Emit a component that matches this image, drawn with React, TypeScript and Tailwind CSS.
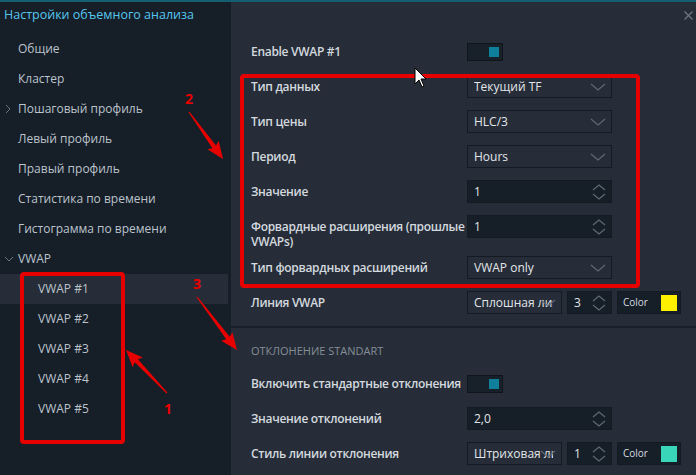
import React from "react";

const font = { fontFamily: '"Open Sans", "Noto Sans", sans-serif' };

const sideItems = [
  { label: "Общие" },
  { label: "Кластер" },
  { label: "Пошаговый профиль", chevron: "right" },
  { label: "Левый профиль" },
  { label: "Правый профиль" },
  { label: "Статистика по времени" },
  { label: "Гистограмма по времени" },
  { label: "VWAP", chevron: "down" },
];

const vwaps = ["VWAP #1", "VWAP #2", "VWAP #3", "VWAP #4", "VWAP #5"];

function ChevronDown() {
  return (
    <svg width="16" height="8" viewBox="0 0 16 8" className="shrink-0">
      <polyline points="1,1 8,7 15,1" fill="none" stroke="#5f6874" strokeWidth="1.2" />
    </svg>
  );
}

function Spinner() {
  return (
    <svg width="14" height="16" viewBox="0 0 14 16" className="shrink-0">
      <polyline points="1,6 7,1 13,6" fill="none" stroke="#5f6874" strokeWidth="1.2" />
      <polyline points="1,10 7,15 13,10" fill="none" stroke="#5f6874" strokeWidth="1.2" />
    </svg>
  );
}

function Select({ value, w = "w-[145px]" }: { value: string; w?: string }) {
  return (
    <div className={`${w} relative h-[23px] flex items-center border border-[#141a22] bg-[#262d38] pl-[6px] pr-[8px]`}>
      <span className="flex-1 min-w-0 overflow-hidden whitespace-nowrap text-[12px] text-[#e2e6ea]">{value}</span>
      <span className="absolute right-[5px] top-[7px] flex">
        <ChevronDown />
      </span>
    </div>
  );
}

function NumInput({ value, w = "w-[145px]" }: { value: string; w?: string }) {
  return (
    <div className={`${w} h-[23px] flex items-center border border-[#141a22] bg-[#161e28] pl-[6px] pr-[5px]`}>
      <span className="flex-1 text-[12px] text-[#e2e6ea]">{value}</span>
      <Spinner />
    </div>
  );
}

function Toggle() {
  return (
    <div className="w-[36px] h-[18px] border border-[#10151c] bg-[#18202a] flex items-center justify-end pr-[3px]">
      <div className="w-[10px] h-[10px] bg-[#0f809b]" />
    </div>
  );
}

function ColorBox({ color }: { color: string }) {
  return (
    <div className="w-[64px] h-[23px] flex items-center justify-between border border-[#141a22] bg-[#161e28] pl-[5px] pr-[3px]">
      <span className="text-[10px] text-[#d8dde2]">Color</span>
      <div className="w-[16px] h-[16px]" style={{ background: color }} />
    </div>
  );
}

function LineRow({ style, width, color }: { style: string; width: string; color: string }) {
  return (
    <div className="flex gap-[5px]">
      <Select value={style} w="w-[95px]" />
      <NumInput value={width} w="w-[45px]" />
      <ColorBox color={color} />
    </div>
  );
}

function Row({ label, children, h = "h-[35px]" }: { label: React.ReactNode; children: React.ReactNode; h?: string }) {
  return (
    <div className={`${h} shrink-0 flex items-start`}>
      <div className="w-[216px] pt-[4px] text-[12px] leading-[15px] font-semibold tracking-[-0.3px] whitespace-nowrap text-[#d3d9df]">
        {label}
      </div>
      <div className="h-[23px] flex items-center">{children}</div>
    </div>
  );
}

function arrow(x1: number, y1: number, x2: number, y2: number) {
  const len = Math.hypot(x2 - x1, y2 - y1);
  const dx = (x2 - x1) / len;
  const dy = (y2 - y1) / len;
  const nx = -dy;
  const ny = dx;
  const hl = 15;
  const bx = x2 - dx * hl;
  const by = y2 - dy * hl;
  const pts = [
    [x1 + nx * 0.6, y1 + ny * 0.6],
    [bx + nx * 2.2, by + ny * 2.2],
    [bx - dx * 2 + nx * 7, by - dy * 2 + ny * 7],
    [x2, y2],
    [bx - dx * 2 - nx * 7, by - dy * 2 - ny * 7],
    [bx - nx * 2.2, by - ny * 2.2],
    [x1 - nx * 0.6, y1 - ny * 0.6],
  ];
  return pts.map((p) => p.join(",")).join(" ");
}

function Annotations() {
  return (
    <svg className="absolute inset-0 pointer-events-none" width="696" height="475" viewBox="0 0 696 475">
      <rect x="242" y="74" width="396" height="210" rx="2" fill="none" stroke="#e60000" strokeWidth="4" />
      <rect x="22" y="272" width="101" height="168" rx="2" fill="none" stroke="#e60000" strokeWidth="4" />
      <polygon points={arrow(189, 110, 223, 157)} fill="#e60000" />
      <polygon points={arrow(197, 295, 237, 348)} fill="#e60000" />
      <polygon points={arrow(167, 391, 126, 348)} fill="#e60000" />
      <text x="185" y="102" fill="#e60000" fontSize="14" fontWeight="700" style={font}>2</text>
      <text x="193" y="287" fill="#e60000" fontSize="14" fontWeight="700" style={font}>3</text>
      <text x="164" y="412" fill="#e60000" fontSize="14" fontWeight="700" style={font}>1</text>
      <polygon points="415,66 415,82 419,78 422,85 424,84 421,77 426,77" fill="#ffffff" stroke="#000000" strokeWidth="1" />
    </svg>
  );
}

export default function App() {
  return (
    <div className="relative w-[696px] h-[475px] overflow-hidden border-t-2 border-[#135f71] flex" style={font}>
      <aside className="w-[231px] h-full bg-[#161e28] flex flex-col">
        <div className="h-[26px] shrink-0 flex items-center pl-[4px] text-[12.5px] text-[#56c6ee]">Настройки объемного анализа</div>
        <div className="mt-[6px] flex flex-col">
          {sideItems.map((it) => (
            <div key={it.label} className="relative h-[30px] shrink-0 flex items-center pl-[18px] text-[12px] text-[#bcc4cc]">
              {it.chevron === "right" && (
                <svg className="absolute left-[5px]" width="6" height="10" viewBox="0 0 6 10">
                  <polyline points="1,1 5,5 1,9" fill="none" stroke="#6b7480" strokeWidth="1" />
                </svg>
              )}
              {it.chevron === "down" && (
                <svg className="absolute left-[4px]" width="10" height="6" viewBox="0 0 10 6">
                  <polyline points="1,1 5,5 9,1" fill="none" stroke="#6b7480" strokeWidth="1" />
                </svg>
              )}
              {it.label}
            </div>
          ))}
          {vwaps.map((v, i) => (
            <div
              key={v}
              className={`w-[228px] h-[30px] shrink-0 flex items-center pl-[38px] text-[12px] text-[#bcc4cc] ${i === 0 ? "bg-[#262d38]" : ""}`}
            >
              {v}
            </div>
          ))}
        </div>
      </aside>

      <main className="flex-1 h-full overflow-hidden bg-[#262d38] flex flex-col">
        <div className="h-[38px] shrink-0 flex justify-end pr-[3px] pt-[9px]">
          <svg width="9" height="9" viewBox="0 0 9 9">
            <path d="M0.5 0.5 L8.5 8.5 M8.5 0.5 L0.5 8.5" stroke="#6d7683" strokeWidth="1.2" />
          </svg>
        </div>
        <div className="pl-[20px] shrink-0 flex flex-col">
          <Row label="Enable VWAP #1">
            <Toggle />
          </Row>
          <Row label="Тип данных">
            <Select value="Текущий TF" />
          </Row>
          <Row label="Тип цены">
            <Select value="HLC/3" />
          </Row>
          <Row label="Период">
            <Select value="Hours" />
          </Row>
          <Row label="Значение">
            <NumInput value="1" />
          </Row>
          <Row
            label={
              <>
                Форвардные расширения (прошлые
                <br />
                VWAPs)
              </>
            }
            h="h-[41px]"
          >
            <NumInput value="1" />
          </Row>
          <Row label="Тип форвардных расширений">
            <Select value="VWAP only" />
          </Row>
          <Row label="Линия VWAP">
            <LineRow style="Сплошная линия" width="3" color="#fff000" />
          </Row>
        </div>
        <div className="h-[2px] shrink-0 bg-[#1a2029]" />
        <div className="pl-[20px] shrink-0 flex flex-col">
          <div className="h-[44px] shrink-0 flex items-center pt-[2px] text-[11px] text-[#858d97] uppercase">Отклонение standart</div>
          <Row label="Включить стандартные отклонения">
            <Toggle />
          </Row>
          <Row label="Значение отклонений">
            <NumInput value="2,0" />
          </Row>
          <Row label="Стиль линии отклонения">
            <LineRow style="Штриховая линия" width="1" color="#3ad6b9" />
          </Row>
        </div>
      </main>

      <Annotations />
    </div>
  );
}
